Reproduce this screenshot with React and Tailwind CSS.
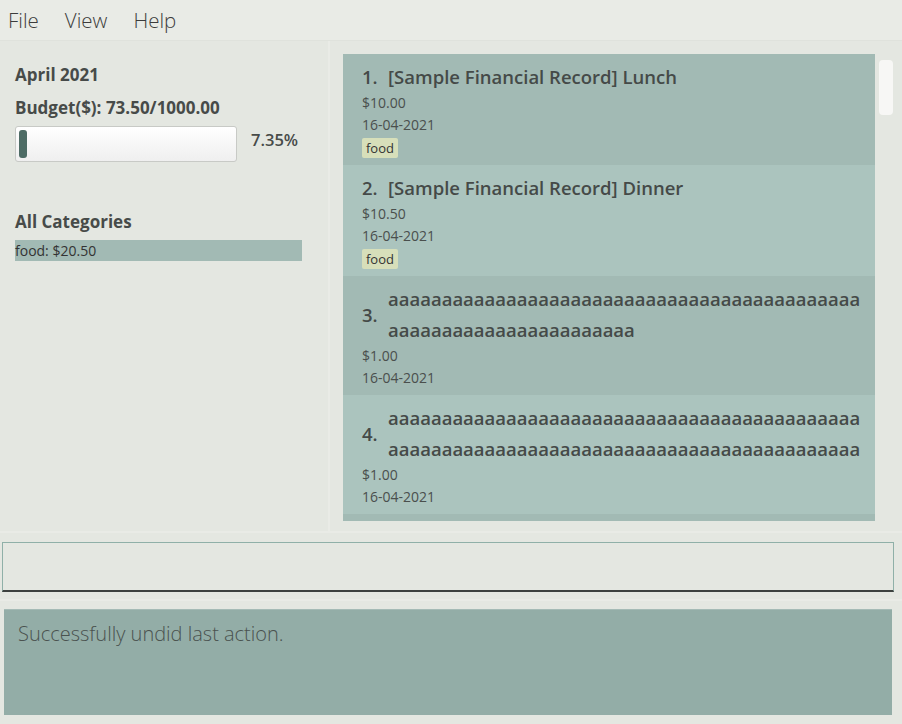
import React from "react";

const records = [
  {
    id: 1,
    title: ["[Sample Financial Record] Lunch"],
    amount: "$10.00",
    date: "16-04-2021",
    tags: ["food"],
  },
  {
    id: 2,
    title: ["[Sample Financial Record] Dinner"],
    amount: "$10.50",
    date: "16-04-2021",
    tags: ["food"],
  },
  {
    id: 3,
    title: ["a".repeat(44), "a".repeat(23)],
    amount: "$1.00",
    date: "16-04-2021",
    tags: [],
  },
  {
    id: 4,
    title: ["a".repeat(44), "a".repeat(44)],
    amount: "$1.00",
    date: "16-04-2021",
    tags: [],
  },
];

const RecordCard = ({ record, index }) => {
  const bg = index % 2 === 0 ? "bg-[#a2bab4]" : "bg-[#abc4be]";
  const hasTags = record.tags.length > 0;
  return (
    <div className={`${bg} pl-[19px] pt-[7px] ${hasTags ? "pb-[7px]" : "pb-[6px]"}`}>
      <div className="flex items-center text-[18.5px] font-semibold text-[#454a48] leading-[31px]">
        <span className="w-[26px] shrink-0">{record.id}.</span>
        <div className="flex flex-col whitespace-nowrap">
          {record.title.map((line, i) => (
            <span key={i}>{line}</span>
          ))}
        </div>
      </div>
      <div className="text-[14px] leading-[22px] text-[#4a4f4d]">{record.amount}</div>
      <div className="text-[14px] leading-[22px] text-[#4a4f4d]">{record.date}</div>
      {hasTags && (
        <div className="flex gap-1 mt-[2px]">
          {record.tags.map((t) => (
            <span
              key={t}
              className="h-[20px] px-[4px] rounded-[2px] bg-[#d7dfba] text-[13px] leading-[20px] text-[#333]"
            >
              {t}
            </span>
          ))}
        </div>
      )}
    </div>
  );
};

export default function App() {
  return (
    <div className="w-[902px] h-[724px] bg-[#e4e7e1] flex flex-col font-['Open_Sans',sans-serif] overflow-hidden">
      {/* menu bar */}
      <div className="h-[41px] bg-[#e9ebe6] border-b border-[#dfe2dc] flex items-center pl-[8px] gap-[26px] text-[20.5px] font-light text-[#3c3c3c]">
        <span>File</span>
        <span>View</span>
        <span>Help</span>
      </div>

      {/* main area */}
      <div className="h-[492px] flex border-b-2 border-[#e9ebe6]">
        <div className="w-[330px] border-r-2 border-[#e9ebe6] pl-[15px] pt-[23px] text-[#474b49]">
          <div className="text-[17px] font-bold leading-[22px]">April 2021</div>
          <div className="text-[17px] font-bold leading-[22px] mt-[11px]">Budget($): 73.50/1000.00</div>
          <div className="flex items-center mt-[7px]">
            <div className="w-[222px] h-[36px] rounded-[3px] border border-[#c8cac6] bg-gradient-to-b from-[#ffffff] to-[#efefef] p-[3px]">
              <div className="w-[8px] h-full rounded-[3px] bg-[#4e6c65]"></div>
            </div>
            <span className="ml-[14px] mb-[8px] text-[16.5px] font-semibold">7.35%</span>
          </div>
          <div className="text-[17px] font-bold leading-[22px] mt-[49px]">All Categories</div>
          <div className="w-[287px] h-[21px] mt-[7px] bg-[#a2bab4] text-[14px] leading-[21px] text-[#333]">
            food: $20.50
          </div>
        </div>

        <div className="flex-1 flex pl-[13px] pt-[13px]">
          <div className="w-[532px] h-[467px] overflow-hidden bg-[#a2bab4]">
            {records.map((r, i) => (
              <RecordCard key={r.id} record={r} index={i} />
            ))}
          </div>
          <div className="ml-[4px] mt-[6px] w-[14px] h-[55px] rounded-[4px] bg-[#f7f7f5]"></div>
        </div>
      </div>

      {/* command box */}
      <div className="h-[68px] pt-[9px] pl-[2px] pr-[8px] border-b-2 border-[#e9ebe6]">
        <div className="h-[50px] border border-[#8fb0a8] border-b-2 border-b-[#3d413f] bg-[#e4e7e1]"></div>
      </div>

      {/* result display */}
      <div className="flex-1 pt-[8px] pl-[4px] pr-[10px] pb-[9px]">
        <div className="h-full bg-[#93ada7] border-t border-[#a5bbb6] pl-[14px] pt-[9px] text-[20px] font-light text-[#4a524f]">
          Successfully undid last action.
        </div>
      </div>
    </div>
  );
}
